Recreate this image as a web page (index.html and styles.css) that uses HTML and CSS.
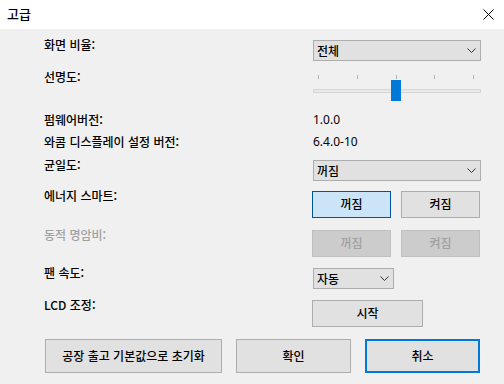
FILE: index.html
```html
<!DOCTYPE html>
<html lang="ko">
<head>
    <meta charset="UTF-8">
    <title>고급</title>
    <link rel="stylesheet" href="styles.css">
</head>
<body>
    <div class="titlebar">
        <span class="title">고급</span>
        <svg class="close" width="11" height="11" viewBox="0 0 11 11">
            <path d="M0.5 0.5 L10.5 10.5 M10.5 0.5 L0.5 10.5" stroke="#000" stroke-width="1" fill="none"/>
        </svg>
    </div>

    <div class="content">
        <div class="row r1">
            <span class="label">화면 비율:</span>
            <div class="select wide">
                <span>전체</span>
                <svg class="arrow" width="9" height="5" viewBox="0 0 9 5"><path d="M0.5 0.5 L4.5 4.5 L8.5 0.5" stroke="#333" fill="none"/></svg>
            </div>
        </div>

        <div class="row r2">
            <span class="label">선명도:</span>
            <div class="slider">
                <div class="ticks">
                    <i></i><i></i><i></i><i></i><i></i>
                </div>
                <div class="track"></div>
                <div class="thumb"></div>
            </div>
        </div>

        <div class="row r3">
            <span class="label">펌웨어버전:</span>
            <span class="label value">1.0.0</span>
        </div>

        <div class="row r4">
            <span class="label">와콤 디스플레이 설정 버전:</span>
            <span class="label value">6.4.0-10</span>
        </div>

        <div class="row r5">
            <span class="label">균일도:</span>
            <div class="select wide">
                <span>꺼짐</span>
                <svg class="arrow" width="9" height="5" viewBox="0 0 9 5"><path d="M0.5 0.5 L4.5 4.5 L8.5 0.5" stroke="#333" fill="none"/></svg>
            </div>
        </div>

        <div class="row r6">
            <span class="label">에너지 스마트:</span>
            <div class="pair">
                <button class="btn selected">꺼짐</button>
                <button class="btn">켜짐</button>
            </div>
        </div>

        <div class="row r7">
            <span class="label disabled">동적 명암비:</span>
            <div class="pair">
                <button class="btn off">꺼짐</button>
                <button class="btn off">켜짐</button>
            </div>
        </div>

        <div class="row r8">
            <span class="label">팬 속도:</span>
            <div class="select small">
                <span>자동</span>
                <svg class="arrow" width="9" height="5" viewBox="0 0 9 5"><path d="M0.5 0.5 L4.5 4.5 L8.5 0.5" stroke="#333" fill="none"/></svg>
            </div>
        </div>

        <div class="row r9">
            <span class="label">LCD 조정:</span>
            <button class="btn start">시작</button>
        </div>

        <div class="actions">
            <button class="btn reset">공장 출고 기본값으로 초기화</button>
            <button class="btn ok">확인</button>
            <button class="btn cancel">취소</button>
        </div>
    </div>
</body>
</html>
```

FILE: styles.css
```css
* {
    box-sizing: border-box;
}
html, body {
    margin: 0;
    height: 100%;
}
body {
    width: 504px;
    height: 384px;
    background: #f0f0f0;
    font-family: "Noto Sans", "Noto Sans CJK KR", sans-serif;
    font-size: 12px;
    color: #000;
    overflow: hidden;
}
.titlebar {
    height: 29px;
    background: #fff;
    display: flex;
    align-items: center;
    justify-content: space-between;
    padding: 0 10px 0 7px;
}
.title {
    font-family: "Noto Sans CJK KR", sans-serif;
    font-size: 13px;
    font-weight: 500;
    line-height: 16px;
    margin-top: -2px;
}
.close {
    display: block;
    margin-top: -1px;
}
.content {
    padding: 11px 24px 0 44px;
}
.row {
    display: grid;
    grid-template-columns: 268px 168px;
    align-items: start;
}
.r1 { height: 32px; }
.r2 { height: 43px; }
.r3 { height: 22px; }
.r4 { height: 23px; }
.r5 { height: 31px; }
.r6 { height: 39px; }
.r7 { height: 38px; }
.r8 { height: 32px; }
.r9 { height: 39px; }

.label {
    font-family: "Noto Sans CJK KR", sans-serif;
    font-weight: 500;
    line-height: 14px;
    margin-top: -2px;
    white-space: nowrap;
}
.value {
    margin-left: 1px;
    font-family: "Noto Sans", sans-serif;
    font-weight: 400;
}
.disabled {
    color: #a0a0a0;
}

.select {
    height: 21px;
    margin-left: 1px;
    background: #e1e1e1;
    border: 1px solid #adadad;
    display: flex;
    align-items: center;
    justify-content: space-between;
    padding: 0 4px 0 3px;
    font-family: "Noto Sans CJK KR", sans-serif;
    font-weight: 500;
}
.select span {
    margin-top: -1px;
}
.wide {
    width: 168px;
}
.small {
    width: 81px;
}
.arrow {
    display: block;
}

.slider {
    position: relative;
    height: 30px;
    margin-left: 1px;
    width: 168px;
}
.ticks {
    display: flex;
    justify-content: space-between;
    padding: 3px 7px 0 5px;
}
.ticks i {
    display: block;
    width: 1px;
    height: 4px;
    background: #b4b4b4;
}
.track {
    margin-top: 10px;
    height: 4px;
    background: #e7eaea;
    border: 1px solid #d6d6d6;
}
.thumb {
    position: absolute;
    left: 78px;
    top: 8px;
    width: 10px;
    height: 21px;
    background: #0078d7;
}

.pair {
    display: flex;
    gap: 10px;
}
.btn {
    font-family: "Noto Sans CJK KR", sans-serif;
    font-weight: 500;
    font-size: 12px;
    color: #000;
    background: #e1e1e1;
    border: 1px solid #adadad;
    padding: 0 0 2px;
    margin: 0;
    height: 27px;
    width: 79px;
}
.selected {
    background: #cce4f7;
    border-color: #005499;
}
.off {
    background: #cccccc;
    border-color: #bfbfbf;
    color: #a0a0a0;
}
.start {
    width: 111px;
}
.actions {
    display: flex;
    gap: 14px;
    margin-left: 1px;
}
.actions .btn {
    height: 34px;
}
.reset {
    width: 177px;
}
.ok, .cancel {
    width: 115px;
}
.cancel {
    border: 2px solid #0078d7;
}
```
